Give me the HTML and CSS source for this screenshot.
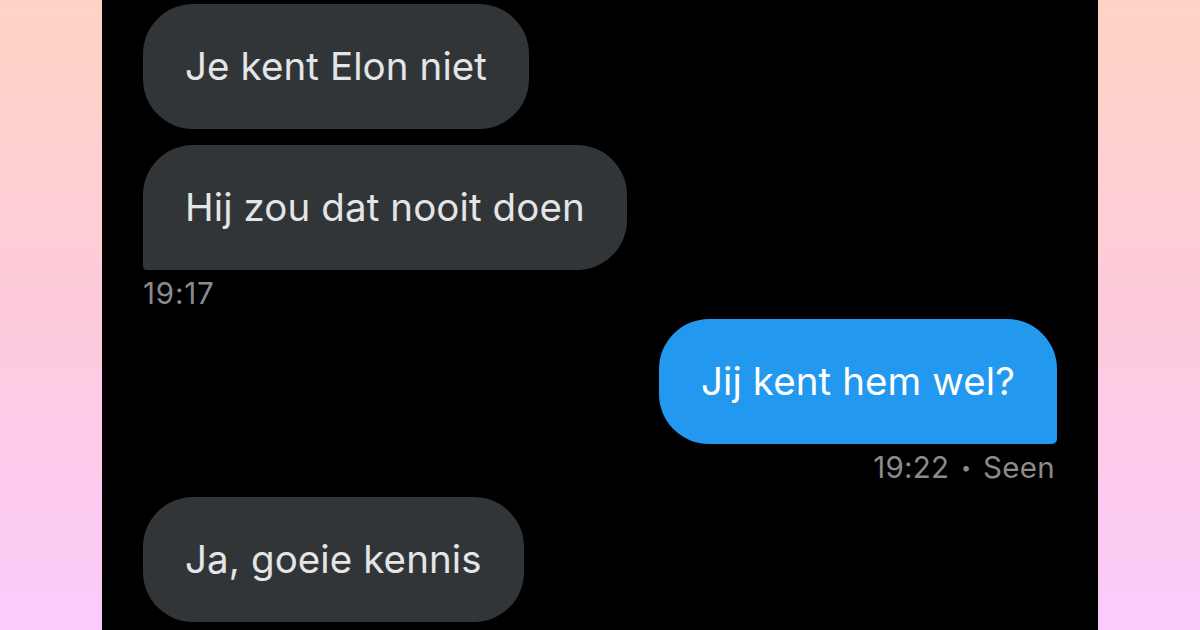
FILE: index.html
```html
<!DOCTYPE html>
<html lang="nl">
<head>
    <meta charset="UTF-8">
    <meta name="viewport" content="width=device-width, initial-scale=1.0">
    <title>Chat</title>
    <link rel="stylesheet" href="styles.css">
</head>
<body>
    <div class="phone">
        <div class="thread">
            <div class="bubble received first">Je kent Elon niet</div>
            <div class="bubble received last">Hij zou dat nooit doen</div>
            <div class="meta meta-left">19:17</div>

            <div class="bubble sent">Jij kent hem wel?</div>
            <div class="meta meta-right">19:22 <span class="dot">•</span> Seen</div>

            <div class="bubble received single">Ja, goeie kennis</div>
        </div>
    </div>
</body>
</html>
```

FILE: styles.css
```css
html, body {
    height: 100%;
}
body {
    margin: 0;
    font-family: Inter, "Noto Sans", sans-serif;
    background: linear-gradient(to bottom, #ffd3c4 0%, #fdcbdc 50%, #fbcbfc 100%);
    display: flex;
    justify-content: center;
    overflow: hidden;
}
.phone {
    width: 996px;
    height: 630px;
    background: #000;
    box-sizing: border-box;
    padding: 4px 41px 0 41px;
}
.thread {
    display: flex;
    flex-direction: column;
    align-items: flex-start;
}
.bubble {
    font-size: 38.5px;
    line-height: 45px;
    padding: 40px 42px;
    border-radius: 50px;
    background: #323538;
    color: #e3e5e7;
    letter-spacing: 0.1px;
}
.bubble.last {
    margin-top: 16px;
    border-bottom-left-radius: 4px;
}
.bubble.sent {
    align-self: flex-end;
    background: #2298ee;
    color: #fff;
    margin-top: 9px;
    border-bottom-right-radius: 5px;
}
.bubble.single {
    margin-top: 12px;
}
.meta {
    font-size: 29.5px;
    line-height: 34px;
    color: #8a8b8d;
    margin-top: 6px;
    letter-spacing: 0.8px;
}
.meta-right {
    align-self: flex-end;
    margin-top: 6px;
    padding-right: 2px;
    letter-spacing: 0.3px;
}
.dot {
    font-size: 18px;
    vertical-align: 4px;
    margin: 0 3px;
}
```
